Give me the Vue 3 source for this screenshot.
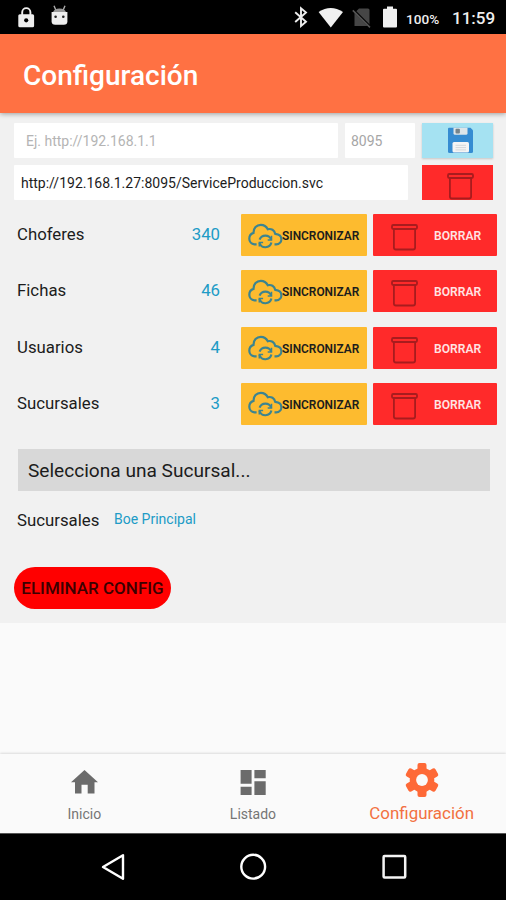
<script setup>
const rows = [
  { name: 'Choferes', count: 340 },
  { name: 'Fichas', count: 46 },
  { name: 'Usuarios', count: 4 },
  { name: 'Sucursales', count: 3 },
]
</script>

<template>
  <div class="screen">
    <div class="status">
      <svg class="lock" width="17" height="23" viewBox="0 0 17 23">
        <path d="M4.200 10V6.200a4.100 4.100 0 0 1 8.200 0V10" fill="none" stroke="#eee" stroke-width="1.900" />
        <rect x="0.300" y="8.200" width="15.800" height="13" rx="1.500" fill="#eee" />
        <circle cx="8.200" cy="14.300" r="2.100" fill="#000" />
      </svg>
      <svg class="droid" width="17" height="21" viewBox="0 0 17 21">
        <path d="M3 .8 4.800 5M14 .8 12.200 5" stroke="#aaa" stroke-width="1.400" />
        <path d="M2 7.200Q3 3.400 8.500 3.400T15 7.200Z" fill="#999" />
        <path d="M.6 7h15.800v9.200a3.600 3.600 0 0 1-3.600 3.600H4.200A3.600 3.600 0 0 1 .6 16.200Z" fill="#eee" />
        <circle cx="4.600" cy="11.700" r="1.300" fill="#222" />
        <circle cx="12.300" cy="11.700" r="1.300" fill="#222" />
      </svg>
      <span class="spacer"></span>
      <svg class="bt" width="14" height="22" viewBox="0 0 14 22">
        <path d="M1.200 6.200 12 15.700 7 20V2.200l5 4.200L1.200 16" fill="none" stroke="#eee" stroke-width="1.900" />
      </svg>
      <svg class="wifi" width="26" height="21" viewBox="0 0 26 21">
        <path d="M.6 5Q12.700-3 25 5L12.800 20.400Z" fill="#f0f0f0" />
      </svg>
      <svg class="sim" width="20" height="21" viewBox="0 0 20 21">
        <path d="M7 1.600h9a1.500 1.500 0 0 1 1.500 1.500V19H2.500V6Z" fill="#464646" />
        <path d="M.8 2.400 18 19.600" stroke="#000" stroke-width="2.600" />
        <path d="M.8 3.400 18 20.400" stroke="#555" stroke-width="1.500" />
      </svg>
      <svg class="batt" width="14" height="22" viewBox="0 0 14 22">
        <path d="M4 .6h6v2.200h3q1 0 1 1V20.600q0 1-1 1H1q-1 0-1-1V3.800q0-1 1-1h3Z" fill="#f0f0f0" />
      </svg>
      <span class="pct">100%</span>
      <span class="clock">11:59</span>
    </div>

    <header class="bar"><h1>Configuración</h1></header>

    <main>
      <div class="line">
        <div class="field host">Ej. http://192.168.1.1</div>
        <div class="field port">8095</div>
        <button class="save">
          <svg width="27" height="27" viewBox="0 0 27 27">
            <path d="M2 .7h21.500L26 3.200V24.500Q26 26 24.500 26H2.500Q1 26 1 24.500V2Q1 .7 2 .7Z" fill="#358cd2" />
            <path d="M6.500.7h14v5.600q0 1.500-1.500 1.500H8q-1.500 0-1.500-1.500Z" fill="#dde5e9" />
            <rect x="8.500" y="1.800" width="4.400" height="4.600" rx="1" fill="#75848c" />
            <rect x="5.500" y="15" width="16.500" height="10.600" rx="1.500" fill="#f4f4f4" />
            <path d="M8.500 18.300h10.500M8.500 20.600h10.500M8.500 22.900h10.500" stroke="#d3d7da" stroke-width="1" />
          </svg>
        </button>
      </div>
      <div class="line second">
        <div class="field url">http://192.168.1.27:8095/ServiceProduccion.svc</div>
        <button class="drop">
          <svg class="bin" width="27" height="28" viewBox="0 0 27 28">
            <rect x="1" y="2" width="25" height="4" rx="1.200" />
            <path d="M2.900 6.500V24.500q0 2 2 2h17.200q2 0 2-2V6.500" />
          </svg>
        </button>
      </div>

      <section class="tables">
        <div v-for="row in rows" :key="row.name" class="row">
          <span class="name">{{ row.name }}</span>
          <span class="count">{{ row.count }}</span>
          <button class="sync">
            <svg width="36" height="27" viewBox="0 0 36 27">
              <g fill="none" stroke="#3c8490" stroke-width="2.200">
                <path d="M8.600 21.400H6.500C3.500 21 1.300 18.500 1.300 15.700c0-2.800 1.700-5 4.200-5.800C5.400 5.200 8.600 1.800 12.800 1.800c3.300 0 5.600 1.700 7 4.500 3.400-1 6.600.8 7.400 4.500 3.900.4 6.200 2.600 6.200 5.400 0 2.700-2.200 4.900-5.200 5.200h-1.700" />
                <path d="M11.600 16.600a6.200 6.200 0 0 1 11.600 0M23.400 19.600a6.200 6.200 0 0 1-11.900.4" />
                <path d="M23.500 12.800v4.300h-3.800M11.300 23.600v-4.100h3.800" stroke-width="1.500" />
              </g>
            </svg>
            <span>SINCRONIZAR</span>
          </button>
          <button class="erase">
            <svg class="bin" width="27" height="28" viewBox="0 0 27 28">
              <rect x="1" y="2" width="25" height="4" rx="1.200" />
              <path d="M2.900 6.500V24.500q0 2 2 2h17.200q2 0 2-2V6.500" />
            </svg>
            <span>BORRAR</span>
          </button>
        </div>
      </section>

      <div class="select">Selecciona una Sucursal...</div>
      <div class="branch">
        <span class="name">Sucursales</span>
        <span class="value">Boe Principal</span>
      </div>
      <button class="wipe">ELIMINAR CONFIG</button>
    </main>

    <nav class="tabs">
      <div class="tab">
        <svg width="28" height="24" viewBox="0 0 28 24">
          <path d="M14.500 0 28 12.300H24.500V23.500H17.700V14.800H11.500V23.500H5V12.300H1Z" fill="#6b6b6b" />
        </svg>
        <span>Inicio</span>
      </div>
      <div class="tab">
        <svg width="26" height="25" viewBox="0 0 26 25">
          <path d="M.6 0h11V13.700H.6ZM14.400 0h11.300v8.200H14.400ZM.6 16.700h11V25H.6ZM14.400 11.200h11.300V25H14.400Z" fill="#6b6b6b" />
        </svg>
        <span>Listado</span>
      </div>
      <div class="tab active">
        <svg width="36" height="36" viewBox="-18 -18 36 36" fill="#fe6937">
          <rect x="-4.500" y="-17" width="9" height="34" rx="2" />
          <rect x="-4.500" y="-17" width="9" height="34" rx="2" transform="rotate(60)" />
          <rect x="-4.500" y="-17" width="9" height="34" rx="2" transform="rotate(120)" />
          <circle r="12.300" />
          <circle r="5.900" fill="#fafafa" />
        </svg>
        <span>Configuración</span>
      </div>
    </nav>

    <div class="system">
      <svg width="28" height="30" viewBox="0 0 28 30">
        <path d="M24 3.200v23.600L4 15Z" fill="none" stroke="#fff" stroke-width="2.400" stroke-linejoin="round" />
      </svg>
      <svg width="28" height="30" viewBox="0 0 28 30">
        <circle cx="14.200" cy="14.700" r="11.900" fill="none" stroke="#fff" stroke-width="2.400" />
      </svg>
      <svg width="28" height="30" viewBox="0 0 28 30">
        <rect x="3.600" y="4" width="21.600" height="21.400" rx="1" fill="none" stroke="#f4f4f4" stroke-width="2.500" />
      </svg>
    </div>
  </div>
</template>

<style>
body {
  margin: 0;
  background: #fafafa;
}
</style>

<style scoped>
* {
  box-sizing: border-box;
}
.screen {
  width: 506px;
  height: 900px;
  display: flex;
  flex-direction: column;
  overflow: hidden;
  background: #fafafa;
  font-family: Roboto, 'Liberation Sans', sans-serif;
  color: #1c1c1c;
  white-space: nowrap;
}
svg {
  display: block;
  flex: none;
}
button {
  border: 0;
  padding: 0;
  margin: 0;
  font: inherit;
  color: inherit;
  display: flex;
  align-items: center;
  flex: none;
}
.status {
  height: 34px;
  flex: none;
  display: flex;
  align-items: center;
  padding: 0 11px 0 18px;
  background: #000;
  color: #eee;
}
.droid {
  margin-left: 16px;
  margin-top: -3px;
}
.spacer {
  flex: 1;
}
.bt {
  margin-right: 1px;
}
.wifi {
  margin-left: 9px;
}
.sim {
  margin-left: 8px;
}
.batt {
  margin-left: 11px;
}
.pct {
  width: 33px;
  margin-left: 9px;
  margin-top: 3px;
  font-size: 13.600px;
  font-weight: 500;
}
.clock {
  width: 43px;
  margin-left: 13px;
  margin-top: 1px;
  font-size: 17px;
  font-weight: 500;
}
.bar {
  height: 79px;
  flex: none;
  display: flex;
  align-items: center;
  padding: 3px 0 0 23px;
  background: #ff7143;
  box-shadow: 0 1px 5px rgba(0, 0, 0, 0.35);
  z-index: 1;
}
h1 {
  margin: 0;
  font-size: 28px;
  font-weight: 500;
  color: #fff;
}
main {
  height: 510px;
  flex: none;
  padding: 10px 9px 0 14px;
  background: #f1f1f1;
}
.line {
  display: flex;
  height: 35px;
}
.second {
  margin-top: 7px;
}
.field {
  display: flex;
  align-items: center;
  padding-top: 1px;
  background: #fff;
  font-size: 14px;
  border-radius: 1px;
}
.host {
  width: 324px;
  padding-left: 12px;
  color: #b4b4b4;
}
.port {
  width: 70px;
  margin-left: 7px;
  padding-left: 6px;
  color: #a6a6a6;
}
.url {
  width: 394px;
  padding-left: 7px;
}
.save {
  width: 71px;
  margin-left: 7px;
  justify-content: center;
  background: #a5e2f2;
  box-shadow: 0 1px 2px rgba(0, 0, 0, 0.18);
  padding-left: 6px;
}
.drop {
  width: 71px;
  margin-left: 14px;
  padding: 6px 0 0 5px;
  justify-content: center;
  background: #ff2a2a;
}
.bin {
  fill: none;
  stroke: #a81c1e;
  stroke-width: 1.8;
}
.tables {
  margin-top: 14px;
  display: grid;
  grid-auto-rows: 42px;
  row-gap: 14.3px;
}
.row {
  display: flex;
}
.name {
  width: 100px;
  padding-left: 3px;
  font-size: 16.800px;
}
.row .name,
.count {
  line-height: 40px;
}
.count {
  width: 106px;
  font-size: 16.800px;
  text-align: right;
  color: #209bc6;
}
.sync {
  width: 126px;
  margin-left: 21px;
  padding: 0 0 0 7px;
  background: #fdbb2f;
  border-radius: 1px;
}
.sync svg {
  margin-top: 2px;
}
.sync span {
  margin-left: -2px;
  padding-top: 2px;
  font-size: 11.900px;
  font-weight: 600;
}
.erase {
  width: 124px;
  margin-left: 6px;
  padding-left: 18px;
  background: #ff2a2a;
  border-radius: 1px;
}
.erase svg {
  margin-top: 4px;
}
.erase span {
  margin-left: 16px;
  padding-top: 2px;
  font-size: 12.100px;
  font-weight: 600;
  color: #ffe3e3;
}
.select {
  width: 472px;
  height: 42px;
  margin: 24px 0 0 4px;
  padding-left: 10px;
  line-height: 43px;
  font-size: 19.100px;
  background: #d8d8d8;
}
.branch {
  display: flex;
  height: 60px;
  line-height: 60px;
}
.branch .name {
  margin-top: -1px;
}
.value {
  margin-top: -2px;
  font-size: 14px;
  color: #209bc6;
}
.wipe {
  width: 157px;
  height: 42px;
  margin-top: 16px;
  justify-content: center;
  border-radius: 21px;
  background: #f00;
  font-size: 17px;
  font-weight: 500;
  color: #3b0000;
}
.tabs {
  height: 79px;
  margin-top: 131px;
  flex: none;
  display: grid;
  grid-template-columns: 1fr 1fr 1fr;
  background: #fafafa;
  box-shadow: 0 -1px 2px rgba(0, 0, 0, 0.12);
}
.tab {
  display: flex;
  flex-direction: column;
  align-items: center;
  padding-top: 16px;
  font-size: 14px;
  color: #757575;
}
.tab span {
  margin-top: auto;
  padding-bottom: 11px;
}
.active {
  padding-top: 8px;
  font-size: 16.900px;
  color: #f27040;
}
.active span {
  padding-bottom: 10px;
}
.system {
  height: 68px;
  flex: none;
  display: flex;
  justify-content: center;
  gap: 112.5px;
  padding-top: 18px;
  background: #000;
  border-top: 1px solid #555;
}
</style>
